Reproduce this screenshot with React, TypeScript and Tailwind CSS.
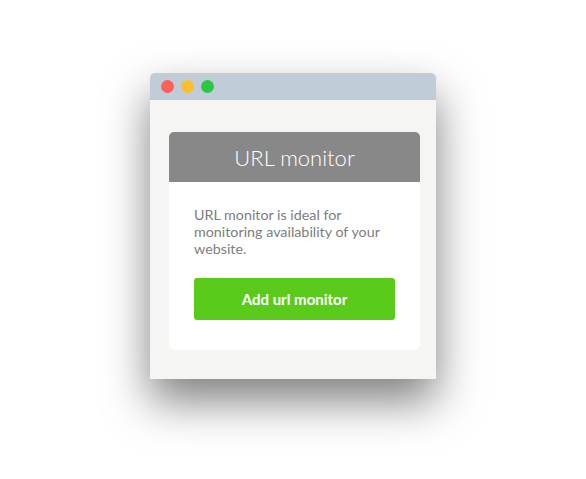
export default function App() {
  return (
    <div className="w-[586px] h-[479px] bg-white flex justify-center pt-[73px] font-['Lato',sans-serif]">
      {/* Browser window */}
      <div className="w-[286px] h-[306px] flex flex-col bg-[#f5f5f3] rounded-t-[5px] shadow-[0_22px_45px_rgba(0,0,0,0.5)]">
        <div className="h-[27px] bg-[#c0cdd8] rounded-t-[5px] flex items-center gap-[7px] pl-[11px]">
          <span className="w-[13px] h-[13px] rounded-full bg-[#fe5f57]" />
          <span className="w-[13px] h-[13px] rounded-full bg-[#ffbd2e]" />
          <span className="w-[13px] h-[13px] rounded-full bg-[#28c840]" />
        </div>

        {/* Card */}
        <div className="mt-[32px] ml-[19px] mr-[16px] bg-white rounded-[5px] overflow-hidden">
          <div className="h-[50px] bg-[#888888] flex items-center justify-center text-white text-[22px] font-light">
            URL monitor
          </div>
          <div className="px-[25px] pt-[24px] pb-[30px]">
            <p className="text-[14.3px] leading-[17px] text-[#7d7d7d]">
              URL monitor is ideal for monitoring availability of your website.
            </p>
            <button className="mt-[21px] w-full h-[42px] rounded-[3px] bg-[#5bcb1b] text-white text-[15px] font-bold">
              Add url monitor
            </button>
          </div>
        </div>
      </div>
    </div>
  );
}
